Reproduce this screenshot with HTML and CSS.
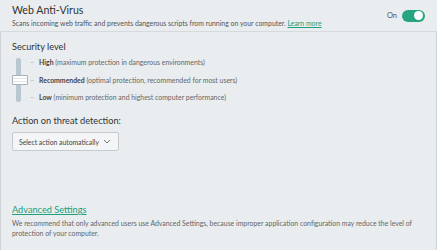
FILE: index.html
```html
<!DOCTYPE html>
<html>

<head>
  <title>Web Anti-Virus</title>
  <link rel="stylesheet" href="styles.css">
</head>

<body>
  <div class="header">
    <div class="header-text">
      <h1>Web Anti-Virus</h1>
      <p class="subtitle">Scans incoming web traffic and prevents dangerous scripts from running on your computer. <a href="#">Learn more</a></p>
    </div>
    <div class="switch-group">
      <span class="switch-label">On</span>
      <span class="switch"><span class="knob"></span></span>
    </div>
  </div>

  <div class="panel">
    <h2>Security level</h2>
    <div class="levels">
      <div class="slider">
        <div class="track"></div>
        <div class="thumb"></div>
      </div>
      <ul class="level-list">
        <li><b>High</b> (maximum protection in dangerous environments)</li>
        <li><b>Recommended</b> (optimal protection, recommended for most users)</li>
        <li><b>Low</b> (minimum protection and highest computer performance)</li>
      </ul>
    </div>

    <h2 class="action-title">Action on threat detection:</h2>
    <div class="select">
      <span>Select action automatically</span>
      <svg width="8" height="5" viewBox="0 0 8 5"><path d="M1 1l3 3 3-3" fill="none" stroke="#777" stroke-width="1"/></svg>
    </div>

    <div class="advanced">
      <a href="#">Advanced Settings</a>
      <p>We recommend that only advanced users use Advanced Settings, because improper application configuration may reduce the level of protection of your computer.</p>
    </div>
  </div>
</body>

</html>
```

FILE: styles.css
```css
/* Global styles */
body {
  font-family: 'Lato', sans-serif;
  margin: 0;
  background-color: #e9edf0;
  color: #333333;
  width: 437px;
  height: 250px;
  overflow: hidden;
  display: flex;
  flex-direction: column;
}

a {
  color: #20a07a;
}

/* Header */
.header {
  display: flex;
  align-items: center;
  justify-content: space-between;
  height: 31px;
  flex-shrink: 0;
  padding: 0 12px;
  border-bottom: 1px solid #d6dadd;
}

h1 {
  font-size: 10.6px;
  font-weight: 400;
  margin: 0;
  line-height: 13px;
}

.subtitle {
  font-size: 6.9px;
  color: #555555;
  margin: 2px 0 0;
  line-height: 9px;
  white-space: nowrap;
}

.switch-group {
  display: flex;
  align-items: center;
  gap: 5px;
}

.switch-label {
  font-size: 7.5px;
  color: #555555;
}

.switch {
  display: flex;
  align-items: center;
  justify-content: flex-end;
  width: 23px;
  height: 12px;
  padding: 0 2px;
  box-sizing: border-box;
  border-radius: 6px;
  background-color: #27a57f;
}

.knob {
  width: 9px;
  height: 9px;
  border-radius: 50%;
  background-color: #ffffff;
}

/* Panel */
.panel {
  flex: 1;
  display: flex;
  flex-direction: column;
  align-items: flex-start;
  border-left: 1px solid #cfd3d6;
  border-right: 1px solid #cfd3d6;
  padding: 9px 11px 12px;
}

h2 {
  font-size: 9.2px;
  font-weight: 400;
  margin: 0;
  line-height: 12px;
}

.levels {
  display: flex;
  margin-top: 5px;
}

.slider {
  position: relative;
  width: 16px;
  height: 44px;
}

.track {
  margin-left: 4px;
  width: 5px;
  height: 44px;
  border-radius: 2px;
  background-color: #b9c7d0;
}

.thumb {
  position: absolute;
  left: 0;
  top: 17px;
  width: 14px;
  height: 8px;
  border: 1px solid #a7b2ba;
  border-radius: 1px;
  background: repeating-linear-gradient(#ffffff 0 2px, #e3e7ea 2px 3px);
}

.level-list {
  list-style: none;
  margin: 0;
  padding: 0 0 0 2px;
  display: flex;
  flex-direction: column;
  justify-content: space-between;
  height: 44px;
  font-size: 6.9px;
  color: #666666;
  line-height: 9px;
}

.level-list li::before {
  content: '\2013';
  color: #aaaaaa;
  margin-right: 5px;
}

.level-list b {
  font-weight: 700;
  color: #444444;
}

.action-title {
  margin-top: 13px;
}

.select {
  display: flex;
  align-items: center;
  justify-content: space-between;
  width: 107px;
  height: 19px;
  box-sizing: border-box;
  margin-top: 5px;
  padding: 0 7px 0 6px;
  border: 1px solid #c4cace;
  border-radius: 2px;
  background-color: #f3f5f6;
  font-size: 6.8px;
  color: #444444;
  white-space: nowrap;
}

.advanced {
  margin-top: auto;
}

.advanced a {
  font-size: 9.2px;
}

.advanced p {
  font-size: 6.9px;
  color: #666666;
  margin: 2px 0 0;
  line-height: 10px;
}
```
